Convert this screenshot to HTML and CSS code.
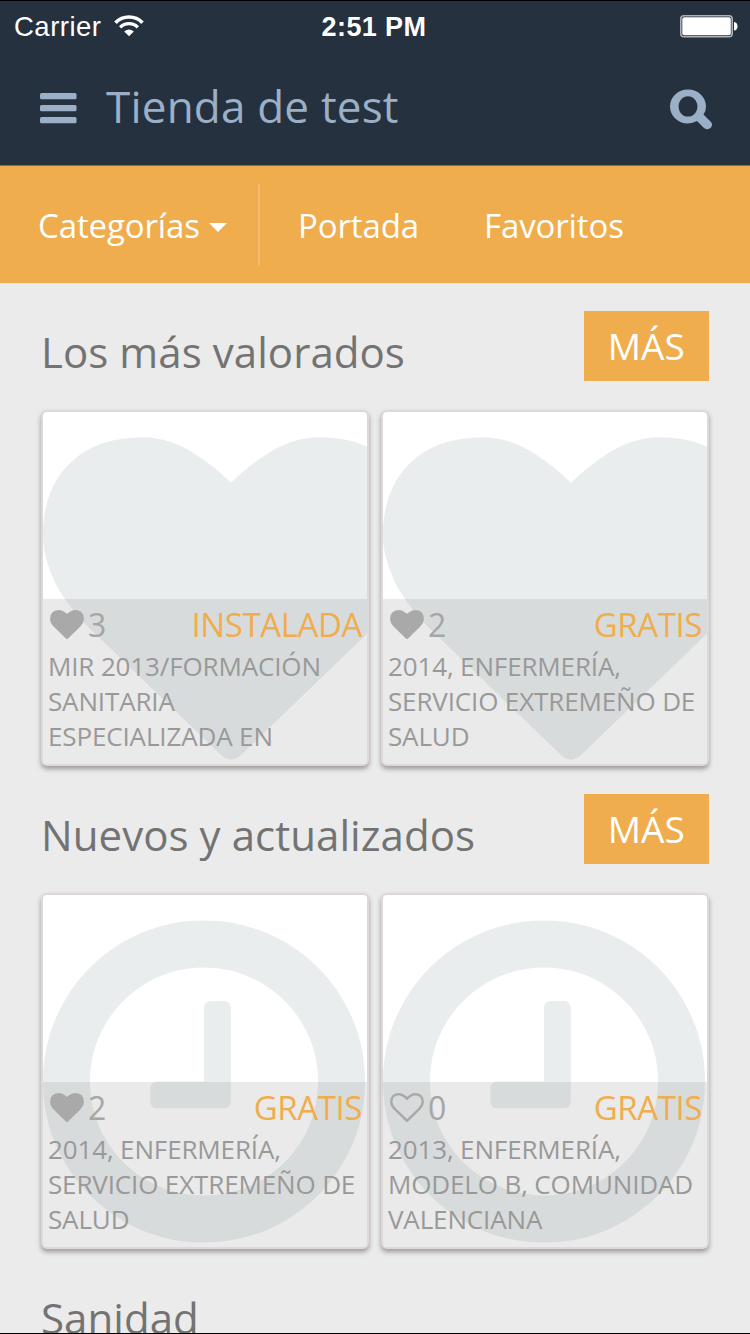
FILE: index.html
```html
<!DOCTYPE html>
<html lang="es">
<head>
<meta charset="utf-8">
<title>Tienda de test</title>
<link rel="stylesheet" href="styles.css">
</head>
<body>
<svg class="sprites" aria-hidden="true">
  <symbol id="heart" viewBox="0 128 1792 1536"><path d="M896 1664q-26 0-44-18l-624-602q-10-8-27.500-26t-55.500-65.500-68-97.500-53.500-121-23.500-138q0-220 127-344t351-124q62 0 126.500 21.500t120 58 95.500 68.500 76 68q36-36 76-68t95.500-68.500 120-58 126.500-21.500q224 0 351 124t127 344q0 221-229 450l-623 600q-18 18-44 18z"/></symbol>
  <symbol id="heart-o" viewBox="0 128 1792 1536"><path d="M1664 596q0-81-21.500-143t-55-98.500-81.500-59.500-94-31-98-8-112 25.500-110.500 64-86.500 72-60 61.500q-18 22-49 22t-49-22q-24-28-60-61.500t-86.500-72-110.500-64-112-25.500-98 8-94 31-81.500 59.500-55 98.500-21.500 143q0 168 187 355l581 560 580-559q188-188 188-356zm128 0q0 221-229 450l-623 600q-18 18-44 18t-44-18l-624-602q-10-8-27.500-26t-55.500-65.500-68-97.500-53.500-121-23.500-138q0-220 127-344t351-124q62 0 126.500 21.500t120 58 95.500 68.500 76 68q36-36 76-68t95.500-68.500 120-58 126.500-21.500q224 0 351 124t127 344z"/></symbol>
  <symbol id="clock" viewBox="128 128 1536 1536"><path d="M1024 544v448q0 14-9 23t-23 9h-320q-14 0-23-9t-9-23v-64q0-14 9-23t23-9h224v-352q0-14 9-23t23-9h64q14 0 23 9t9 23zm416 352q0-148-73-273t-198-198-273-73-273 73-198 198-73 273 73 273 198 198 273 73 273-73 198-198 73-273zm224 0q0 209-103 385.500t-279.500 279.500-385.500 103-385.500-103-279.500-279.500-103-385.500 103-385.500 279.500-279.500 385.500-103 385.500 103 279.500 279.500 103 385.500z"/></symbol>
</svg>
<div class="screen">
  <div class="status">
    <div class="status-left">
      <span class="carrier">Carrier</span>
      <svg class="wifi" width="30" height="22" viewBox="0 0 30 22" fill="none" stroke="#fff">
        <path d="M1.500 7.700a19 19 0 0 1 27 0" stroke-width="3.600"/>
        <path d="M6.200 12.300a12.400 12.400 0 0 1 17.600 0" stroke-width="3.300"/>
        <path d="M15 21.300l-4.800-4.900q4.800-3.600 9.600 0z" fill="#fff" stroke="none"/>
      </svg>
    </div>
    <span class="time">2:51 PM</span>
    <svg class="battery" width="58" height="23" viewBox="0 0 58 23">
      <rect x=".8" y=".8" width="51.400" height="21" rx="3" fill="none" stroke="#aab0b5" stroke-width="1.600"/>
      <rect x="2.300" y="2.300" width="48.500" height="18" rx="1.800" fill="#fff"/>
      <path d="M54 7q3.500.3 3.500 4.300t-3.500 4.300z" fill="#fff"/>
    </svg>
  </div>
  <header class="header">
    <svg class="bars" width="37" height="31" viewBox="0 0 37 31" fill="#9bb0c6"><rect width="36.500" height="6.300" rx="1.500"/><rect y="12" width="36.500" height="6.300" rx="1.500"/><rect y="24" width="36.500" height="6.300" rx="1.500"/></svg>
    <h1 class="title">Tienda de test</h1>
    <svg class="search" width="43" height="41" viewBox="0 0 43 41"><path fill="#9bb0c6" fill-rule="evenodd" d="M18 .5C8 .5 0 8 0 17.400s8 17 18 17q5 0 9-2.300l6.500 6.500q2 2 5 1.400 3.500-1 3.500-4.400 0-1.600-1-2.600l-7.500-7.500Q36 22 36 17.400C36 8 28 .5 18 .5zM18 7.200c5.300 0 9.400 4.500 9.400 10.200S23.300 27.600 18 27.600 8.600 23.100 8.600 17.400 12.700 7.200 18 7.200z"/></svg>
  </header>
  <nav class="nav">
    <a class="categories">Categorías<span class="caret"></span></a>
    <a class="nav-home">Portada</a>
    <a class="nav-fav">Favoritos</a>
  </nav>
  <main class="content">
    <section class="section">
      <div class="section-head"><h2 class="heading">Los más valorados</h2><a class="more">MÁS</a></div>
      <div class="cards">
        <article class="card">
          <svg class="art art-heart"><use href="#heart"/></svg>
          <div class="info">
            <div class="meta"><svg class="like"><use href="#heart"/></svg><span class="count">3</span><span class="price">INSTALADA</span></div>
            <p class="desc">MIR 2013/FORMACIÓN<br>SANITARIA<br>ESPECIALIZADA EN</p>
          </div>
        </article>
        <article class="card">
          <svg class="art art-heart"><use href="#heart"/></svg>
          <div class="info">
            <div class="meta"><svg class="like"><use href="#heart"/></svg><span class="count">2</span><span class="price">GRATIS</span></div>
            <p class="desc">2014, ENFERMERÍA,<br>SERVICIO EXTREMEÑO DE<br>SALUD</p>
          </div>
        </article>
      </div>
    </section>
    <section class="section">
      <div class="section-head"><h2 class="heading">Nuevos y actualizados</h2><a class="more">MÁS</a></div>
      <div class="cards">
        <article class="card">
          <svg class="art art-clock"><use href="#clock"/></svg>
          <div class="info">
            <div class="meta"><svg class="like"><use href="#heart"/></svg><span class="count">2</span><span class="price">GRATIS</span></div>
            <p class="desc">2014, ENFERMERÍA,<br>SERVICIO EXTREMEÑO DE<br>SALUD</p>
          </div>
        </article>
        <article class="card">
          <svg class="art art-clock"><use href="#clock"/></svg>
          <div class="info">
            <div class="meta"><svg class="like"><use href="#heart-o"/></svg><span class="count">0</span><span class="price">GRATIS</span></div>
            <p class="desc">2013, ENFERMERÍA,<br>MODELO B, COMUNIDAD<br>VALENCIANA</p>
          </div>
        </article>
      </div>
    </section>
    <section class="section">
      <div class="section-head"><h2 class="heading">Sanidad</h2></div>
    </section>
  </main>
</div>
</body>
</html>
```
FILE: styles.css
```css
* { box-sizing: border-box; }
body { margin: 0; background: #ebebeb; }
h1, h2, p { margin: 0; font-weight: 400; }
.sprites { position: absolute; width: 0; height: 0; }

.screen {
  width: 750px;
  height: 1334px;
  overflow: hidden;
  display: flex;
  flex-direction: column;
  border-top: 1px solid #000;
  border-bottom: 1px solid #000;
  background: #ebebeb;
  font-family: "Open Sans", sans-serif;
  white-space: nowrap;
}

.status {
  flex: none;
  height: 49px;
  display: grid;
  grid-template-columns: 1fr auto 1fr;
  align-items: center;
  padding: 0 12px 0 14px;
  background: #26313f;
  color: #fff;
  font-family: "Liberation Sans", sans-serif;
  font-size: 27.500px;
  line-height: 50px;
}
.status-left { display: flex; align-items: center; gap: 12px; }
.carrier { margin-top: 1px; letter-spacing: .5px; }
.wifi { margin-top: -1px; }
.time { margin: 1px 4px 0 0; font-weight: 700; font-size: 27px; letter-spacing: .4px; }
.battery { justify-self: end; }

.header {
  flex: none;
  height: 115px;
  display: flex;
  align-items: center;
  padding: 0 37px 0 40px;
  background: #26313f;
}
.bars { margin-top: 2px; }
.title {
  flex: 1;
  margin: -3px 0 0 29px;
  color: #9bb0c6;
  font-size: 44px;
  line-height: 60px;
  letter-spacing: .2px;
}
.search { margin-top: 4px; }

.nav {
  flex: none;
  height: 118px;
  display: flex;
  align-items: center;
  padding: 1px 0 0 38px;
  border-top: 1px solid #8b6e47;
  background: #f0ad4e;
  color: #fff;
  font-size: 33px;
  letter-spacing: -.12px;
}
.categories {
  display: flex;
  align-items: center;
  width: 222px;
  height: 82px;
  padding-top: 1px;
  border-right: 2px solid #f3bb6d;
}
.caret {
  margin: 3px 0 0 9px;
  border: 9.500px solid transparent;
  border-top-color: #fff;
  border-bottom: 0;
}
.nav-home { width: 186px; margin-left: 38px; padding-top: 1px; }
.nav-fav { padding-top: 1px; }

.content { padding: 28px 41px 0 41px; }
.section { height: 483px; }
.section-head { height: 99px; display: flex; justify-content: space-between; }
.heading { color: #737373; font-size: 42px; line-height: 81px; letter-spacing: .06px; }
.more {
  width: 125.500px;
  height: 70px;
  background: #f0ad4e;
  color: #fff;
  font-size: 37px;
  line-height: 70px;
  text-align: center;
}

.cards { display: flex; gap: 12px; }
.card {
  position: relative;
  width: 328px;
  height: 356px;
  display: flex;
  flex-direction: column;
  justify-content: flex-end;
  overflow: hidden;
  border: 2px solid #dfd7d8;
  border-radius: 6px;
  background: #fff;
  box-shadow: 0 3px 5px rgba(0, 0, 0, .35);
}
.art { position: absolute; top: 25px; left: 0; height: 323px; fill: #e9eded; }
.art-heart { width: 376px; }
.art-clock { width: 322px; }

.info {
  position: relative;
  height: 165px;
  padding: 0 5px;
  background: rgba(150, 150, 150, .2);
}
.meta { display: flex; align-items: center; height: 50px; font-size: 33px; color: #a6a6a6; }
.like { width: 34px; height: 29px; margin-left: 2px; fill: #a9a9a9; }
.count { margin-left: 4px; font-size: 32px; }
.price { margin-left: auto; color: #f0ad4e; letter-spacing: -.4px; }
.desc { color: #999; font-size: 26px; line-height: 35px; letter-spacing: -.14px; }
```
